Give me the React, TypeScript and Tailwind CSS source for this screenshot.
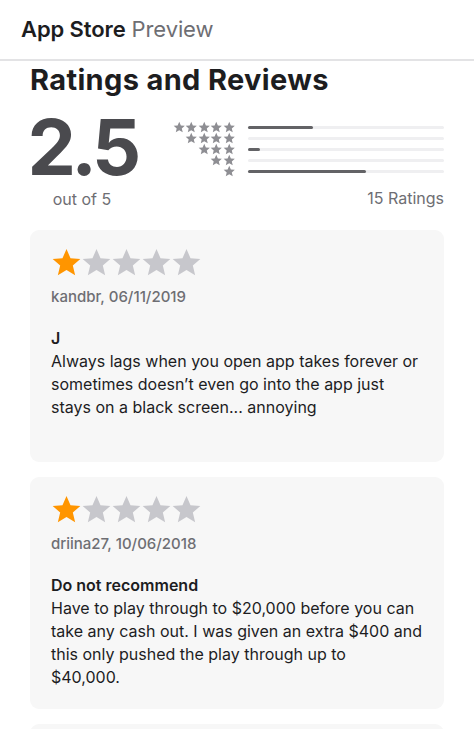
import React from "react";

const font = { fontFamily: "Inter, 'Noto Sans', sans-serif" };

function Star({ className }: { className: string }) {
  return (
    <svg viewBox="0 0 24 24" className={className} fill="currentColor">
      <path d="M12 1.6l3.1 7.1 7.6.6-5.8 5 1.8 7.5L12 17.8l-6.7 4 1.8-7.5-5.8-5 7.6-.6z" />
    </svg>
  );
}

const histogram = [
  { stars: 5, pct: 33 },
  { stars: 4, pct: 0 },
  { stars: 3, pct: 6 },
  { stars: 2, pct: 0 },
  { stars: 1, pct: 60 },
];

const reviews = [
  {
    author: "kandbr, 06/11/2019",
    title: "J",
    body: "Always lags when you open app takes forever or sometimes doesn’t even go into the app just stays on a black screen... annoying",
  },
  {
    author: "driina27, 10/06/2018",
    title: "Do not recommend",
    body: "Have to play through to $20,000 before you can take any cash out. I was given an extra $400 and this only pushed the play through up to\n$40,000.",
  },
];

export default function App() {
  return (
    <div className="bg-white w-[474px] h-[729px] overflow-hidden" style={font}>
      {/* Header */}
      <div className="h-[61px] border-b-2 border-[#e3e3e5] flex items-center px-[21px]">
        <span className="text-[22px] tracking-[-0.005em] text-[#1d1d1f]">
          <span className="font-semibold">App Store</span>{" "}
          <span className="text-[#6e6e73]">Preview</span>
        </span>
      </div>

      <div className="px-[30px]">
        <h2 className="text-[29px] font-bold text-[#1d1d1f] tracking-[0.012em] mt-[1px] leading-[36px]">
          Ratings and Reviews
        </h2>

        {/* Summary */}
        <div className="flex mt-[9px]">
          <div className="flex flex-col items-center w-[110px]">
            <span className="text-[77px] font-bold text-[#4a4a4e] tracking-[-0.06em] leading-[80px] mr-[6px]">
              2.5
            </span>
            <span className="text-[16px] text-[#6e6e73] mr-[6px]">out of 5</span>
          </div>
          <div className="flex-1 flex flex-col ml-[33px]">
            <div className="flex flex-col gap-[3px] mt-[16px]">
              {histogram.map((row) => (
                <div key={row.stars} className="flex items-center h-[8px]">
                  <div className="w-[62px] flex justify-end">
                    {Array.from({ length: row.stars }).map((_, i) => (
                      <Star key={i} className="w-[12.5px] h-[12.5px] shrink-0 text-[#8e8e93]" />
                    ))}
                  </div>
                  <div className="flex-1 ml-[13px] h-[3px] rounded-full bg-[#efeff1]">
                    <div
                      className="h-full rounded-full bg-[#636366]"
                      style={{ width: `${row.pct}%` }}
                    />
                  </div>
                </div>
              ))}
            </div>
            <span className="text-[16px] text-[#6e6e73] text-right mt-[11px]">15 Ratings</span>
          </div>
        </div>

        {/* Reviews */}
        <div className="flex flex-col gap-[15px] mt-[19px]">
          {[...reviews, null].map((r, idx) =>
            r ? (
              <div key={idx} className="bg-[#f7f7f7] rounded-[9px] h-[232px] pt-[17px] px-[21px]">
                <div className="flex">
                  {[0, 1, 2, 3, 4].map((i) => (
                    <Star
                      key={i}
                      className={`w-[31px] h-[31px] -mr-[1px] ${i === 0 ? "text-[#ff9500]" : "text-[#c7c7cc]"}`}
                    />
                  ))}
                </div>
                <div className="text-[15px] font-medium text-[#6e6e73] mt-[8px]">{r.author}</div>
                <div className="text-[16px] font-semibold text-[#1d1d1f] mt-[18px] leading-[23px]">
                  {r.title}
                </div>
                <p className="text-[16px] text-[#1d1d1f] leading-[23px] whitespace-pre-line">{r.body}</p>
              </div>
            ) : (
              <div key={idx} className="bg-[#f7f7f7] rounded-[9px] h-[232px]" />
            )
          )}
        </div>
      </div>
    </div>
  );
}
